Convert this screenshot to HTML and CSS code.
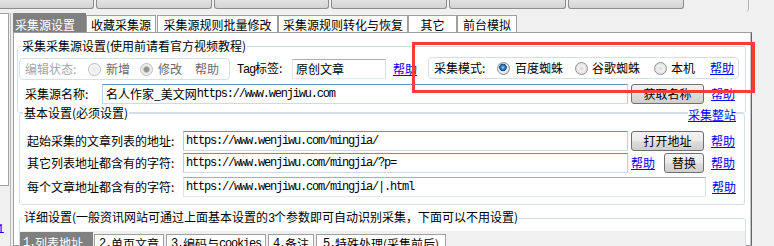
FILE: index.html
```html
<!DOCTYPE html>
<html>
<head>
	<meta charset="utf-8">
	<title>采集源设置</title>
	<link rel="stylesheet" href="styles.css">
</head>
<body>

	<div class="topbar">
		<div class="topbtn b1"></div>
		<div class="topbtn b2"></div>
		<div class="topbtn b3"></div>
		<div class="topbtn b4"></div>
		<div class="topbtn b5"></div>
		<div class="topbtn b6"></div>
	</div>

	<div class="main">
		<div class="leftcol">
			<div class="leftpanel"></div>
			<span class="m stub">1</span>
		</div>
		<div class="splitter"></div>

		<div class="tabctl">
			<div class="tabstrip">
				<div class="tab sel t1">采集源设置</div>
				<div class="tab t2">收藏采集源</div>
				<div class="tab t3">采集源规则批量修改</div>
				<div class="tab t4">采集源规则转化与恢复</div>
				<div class="tab t5">其它</div>
				<div class="tab t6">前台模拟</div>
			</div>

			<div class="tabpage">

				<fieldset class="group g1">
					<legend>采集采集源设置(使用前请看官方视频教程)</legend>
					<div class="row ra">
						<div class="optbox editbox">
							<span class="optlbl dis">编辑状态:</span>
							<span class="radio dim first"></span><span class="opt">新增</span>
							<span class="radio dim on second"></span><span class="opt">修改</span>
							<span class="opt plainhelp">帮助</span>
						</div>
						<span class="taglbl"><span class="m">Tag</span>标签:</span>
						<div class="field gray tagfield">原创文章</div>
						<span class="link taghelp">帮助</span>
						<div class="optbox modebox">
							<span class="optlbl">采集模式:</span>
							<span class="radio on first"></span><span class="opt">百度蜘蛛</span>
							<span class="radio m2"></span><span class="opt tight">谷歌蜘蛛</span>
							<span class="radio m3"></span><span class="opt tight">本机</span>
							<span class="link modehelp">帮助</span>
						</div>
					</div>
					<div class="row rb">
						<span class="rowlbl namelbl">采集源名称:</span>
						<div class="field namefield">名人作家_美文网<span class="m">https://www.wenjiwu.com</span></div>
						<div class="btn wide">获取名称</div>
						<span class="link rowhelp">帮助</span>
					</div>
				</fieldset>

				<fieldset class="group g2">
					<legend>基本设置(必须设置)</legend>
					<div class="grouphead"><span class="link">采集整站</span></div>
					<div class="row rc">
						<span class="rowlbl urllbl">起始采集的文章列表的地址:</span>
						<div class="field urlfield"><span class="m">https://www.wenjiwu.com/mingjia/</span></div>
						<div class="btn wide">打开地址</div>
						<span class="link rowhelp">帮助</span>
					</div>
					<div class="row rd">
						<span class="rowlbl urllbl">其它列表地址都含有的字符:</span>
						<div class="field urlfield"><span class="m">https://www.wenjiwu.com/mingjia/?p=</span></div>
						<span class="link midhelp">帮助</span>
						<div class="btn small">替换</div>
						<span class="link rowhelp">帮助</span>
					</div>
					<div class="row re">
						<span class="rowlbl urllbl">每个文章地址都含有的字符:</span>
						<div class="field gray longfield"><span class="m">https://www.wenjiwu.com/mingjia/|.html</span></div>
						<span class="link lasthelp">帮助</span>
					</div>
				</fieldset>

				<fieldset class="group g3">
					<legend>详细设置(一般资讯网站可通过上面基本设置的<span class="m">3</span>个参数即可自动识别采集，下面可以不用设置)</legend>
					<div class="substrip">
						<div class="subtab sel s1"><span class="m">1.</span>列表地址</div>
						<div class="subtab s2"><span class="m">2.</span>单页文章</div>
						<div class="subtab s3"><span class="m">3.</span>编码与<span class="m">cookies</span></div>
						<div class="subtab s4"><span class="m">4.</span>备注</div>
						<div class="subtab s5"><span class="m">5.</span>特殊处理(采集前后)</div>
					</div>
				</fieldset>

			</div>
		</div>
	</div>

	<div class="mark"></div>

</body>
</html>
```

FILE: styles.css
```css
* {
	box-sizing: border-box;
}
body {
	margin: 0;
	width: 774px;
	height: 246px;
	overflow: hidden;
	position: relative;
	background: #f0f0f0;
	color: #000;
	font: 12px/14px "Noto Sans CJK SC", sans-serif;
	white-space: nowrap;
}
.m {
	font-family: "Liberation Mono", monospace;
	font-size: 12px;
	letter-spacing: -1.2px;
}
.link {
	color: #0000ff;
	text-decoration: underline;
}

/* top buttons, only their lower edge shows */
.topbar {
	display: flex;
	gap: 2px;
	width: 749px;
	height: 12px;
	border-right: 1px solid #b4b4b4;
	border-bottom-right-radius: 4px;
}
.topbtn {
	height: 9px;
	border: 1px solid #8d8d8d;
	border-top: none;
	border-radius: 0 0 3px 3px;
	background: linear-gradient(#e2e2e2, #d3d3d3);
}
.b1 { width: 94px; border-left: none; border-bottom-left-radius: 0; }
.b2 { width: 116px; }
.b3 { width: 115px; }
.b4 { width: 116px; }
.b5 { width: 117px; }
.b6 { width: 116px; }

.main {
	display: flex;
	height: 234px;
}
.leftcol {
	width: 9px;
	display: flex;
	flex-direction: column;
}
.leftpanel {
	height: 173px;
	margin-top: 1px;
	background: #fff;
	border: 1px solid #a0a0a0;
	border-left: none;
}
.stub {
	margin: 37px 0 0 -3px;
	color: #0000ff;
}
.splitter {
	width: 1px;
	margin: 1px 2px 0 1px;
	background: #b8b8b8;
}

/* main tab control */
.tabctl {
	width: 739px;
	display: flex;
	flex-direction: column;
}
.tabstrip {
	display: flex;
	align-items: flex-end;
	height: 20px;
}
.tab {
	height: 17px;
	padding-top: 2px;
	display: flex;
	align-items: center;
	justify-content: center;
	background: #fff;
	border: 1px solid #a0a0a0;
	border-bottom: none;
}
.tab.sel {
	height: 19px;
	padding: 4px 0 0 2px;
	justify-content: flex-start;
	background: #808080;
	border: none;
	color: #fff;
}
.t1 { width: 73px; }
.t2 { width: 70px; }
.t3 { width: 121px; margin-left: 1px; }
.t4 { width: 130px; }
.t5 { width: 49px; }
.t6 { width: 60px; }

.tabpage {
	height: 214px;
	background: #fff;
	border: 1px solid #a0a0a0;
	border-right-color: #666;
	box-shadow: inset -1px 0 0 #c4c4c4;
}

/* group boxes */
.group {
	margin: 0;
	padding: 0;
	min-width: 0;
	border: 1px solid #d5dfe5;
	border-radius: 3px;
}
.group legend {
	margin-left: 3px;
	padding: 0 1px;
	line-height: 14px;
	background: #fff;
}
.g1 {
	width: 729px;
	margin: 6px 0 0 3px;
	padding-bottom: 8px;
}
.g2 {
	width: 726px;
	margin: -7px 0 0 5px;
	padding-bottom: 7px;
}
.g3 {
	width: 727px;
	margin: 5px 0 0 5px;
}
.grouphead {
	display: flex;
	justify-content: flex-end;
	align-items: flex-start;
	height: 0;
	padding-right: 8px;
}
.grouphead .link {
	margin-top: -12px;
	background: #fff;
}

.row {
	display: flex;
	align-items: center;
}
.ra { height: 24px; margin-top: 4px; }
.rb { height: 20px; margin-top: 3px; }
.rc { height: 21px; margin-top: 10px; }
.rd { height: 21px; margin-top: 1px; }
.re { height: 21px; margin-top: 3px; }

.rowlbl { margin-left: 7px; }
.namelbl { width: 77px; }
.urllbl { width: 156px; }

/* rounded option boxes */
.optbox {
	display: flex;
	align-items: center;
	height: 22px;
	padding-left: 5px;
	border: 1px solid #d5dfe5;
	border-radius: 4px;
}
.editbox { width: 211px; margin-left: 1px; }
.modebox { width: 311px; margin: 0 0 2px 11px; }
.optlbl { width: 60px; }
.dis { color: #a6a6a6; }
.opt { margin-left: 5px; }
.opt.tight { margin-left: 4px; }
.editbox .opt { color: #6a6a6a; }
.plainhelp { margin-left: 13px; }
.modehelp { margin-left: 15px; }

.radio {
	flex: none;
	width: 13px;
	height: 13px;
	border-radius: 50%;
	border: 1px solid #8e8f8f;
	background: radial-gradient(circle, #d6d6d6 0, #f2f2f2 3px, #e2e2e2 5px, #f8f8f8 6px);
}
.radio.on {
	background: radial-gradient(circle at 45% 40%, #94d6fb 0, #2b80c3 2px, #154777 3.5px, #d8d8d8 4px, #f4f4f4 5px, #dcdcdc 6px);
}
.radio.dim {
	border-color: #bcbcbc;
	background: radial-gradient(circle, #e8e8e8 0, #f6f6f6 5px);
}
.radio.dim.on {
	background: radial-gradient(circle, #8c8c8c 0, #9a9a9a 2.5px, #e4e4e4 3.5px, #f6f6f6 6px);
}
.radio.first { margin-left: 3px; }
.radio.second { margin-left: 10px; }
.radio.m2 { margin-left: 12px; }
.radio.m3 { margin-left: 14px; }

.taglbl {
	width: 55px;
	margin-left: 7px;
}
.taghelp { margin-left: 7px; }

/* text boxes */
.field {
	display: flex;
	align-items: center;
	height: 20px;
	padding-left: 2px;
	overflow: hidden;
	background: #fff;
	border: 1px solid;
	border-color: #6592c0 #b6cfe7 #c8dcee #b6cfe7;
}
.field.gray {
	border-color: #abadb3 #dbdfe6 #e3e9ef #e2e3ea;
}
.tagfield { width: 94px; padding-left: 3px; }
.namefield { width: 526px; padding-left: 3px; }
.urlfield { width: 445px; }
.longfield { width: 523px; }

/* push buttons */
.btn {
	display: flex;
	align-items: center;
	justify-content: center;
	height: 20px;
	margin-left: 3px;
	border: 1px solid #707070;
	border-radius: 3px;
	background: linear-gradient(#f2f2f2 0%, #ebebeb 48%, #dddddd 52%, #cfcfcf 100%);
}
.btn.wide { width: 73px; }
.btn.small { width: 40px; margin-left: 9px; }
.rowhelp { margin-left: 7px; }
.midhelp { margin-left: 3px; }
.lasthelp { margin-left: 6px; }

/* detail tabs */
.substrip {
	display: flex;
	align-items: flex-end;
	height: 20px;
	margin-top: 5px;
	background: #f0f0f0;
}
.subtab {
	height: 17px;
	padding-top: 1px;
	display: flex;
	align-items: center;
	justify-content: center;
	background: #fff;
	border: 1px solid #a0a0a0;
	border-bottom: none;
}
.subtab.sel {
	height: 19px;
	padding: 2px 0 0 3px;
	justify-content: flex-start;
	background: #808080;
	border: none;
	color: #fff;
}
.s1 { width: 73px; }
.s2 { width: 70px; margin-left: 1px; }
.s3 { width: 100px; margin-left: 2px; }
.s4 { width: 46px; margin-left: 2px; }
.s5 { width: 130px; margin-left: 2px; }

/* red annotation frame drawn over the form */
.mark {
	position: absolute;
	left: 412px;
	top: 42px;
	width: 343px;
	height: 51px;
	border: 3px solid #f83c3c;
	pointer-events: none;
}
```
